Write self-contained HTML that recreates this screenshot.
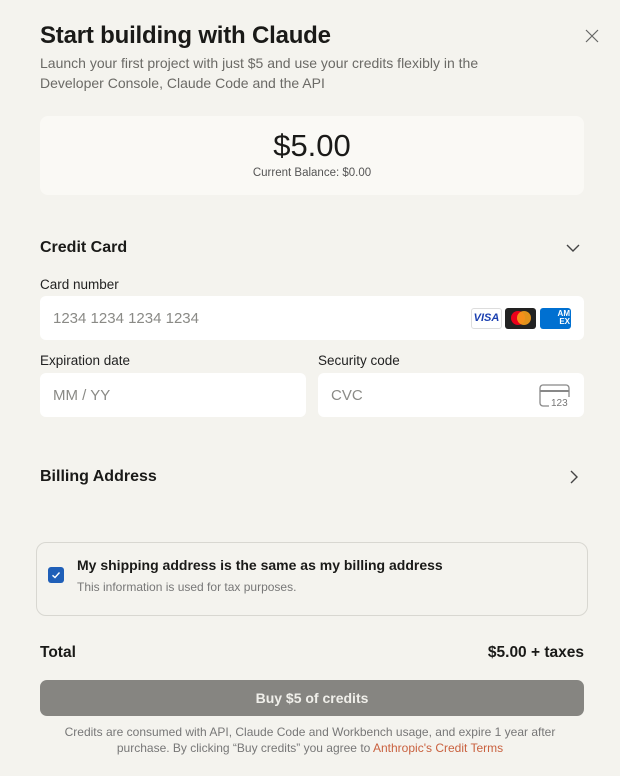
<!DOCTYPE html>
<html><head><style>
*{box-sizing:border-box;margin:0;padding:0}
body{width:620px;height:776px;background:#f4f3ee;font-family:"Liberation Sans",sans-serif;color:#1a1a18;position:relative;overflow:hidden}
.a{position:absolute}
.box{background:#fff;border-radius:6px}
.ph{color:#8a8a86;font-size:15px}
.lbl{font-size:13.5px;color:#222}
</style></head><body>
<div class="a" style="left:40px;top:22px;font-size:24px;font-weight:bold;letter-spacing:-0.2px">Start building with Claude</div>
<svg class="a" style="left:585px;top:29px" width="14" height="14" viewBox="0 0 14 14"><path d="M1 1L13 13M13 1L1 13" stroke="#666" stroke-width="1.2"/></svg>
<div class="a" style="left:40px;top:53px;font-size:14px;line-height:20px;color:#6b6a66;width:500px">Launch your first project with just $5 and use your credits flexibly in the Developer Console, Claude Code and the API</div>
<div class="a" style="left:40px;top:116px;width:544px;height:79px;background:#faf9f5;border-radius:8px;text-align:center">
<div style="font-size:31px;margin-top:12px;color:#1a1a18">$5.00</div>
<div style="font-size:11.5px;color:#555;margin-top:3px">Current Balance: $0.00</div></div>
<div class="a" style="left:40px;top:239px;font-size:16px;font-weight:bold">Credit Card</div>
<svg class="a" style="left:566px;top:243px" width="14" height="10"><path d="M1 2L7 8L13 2" stroke="#444" fill="none" stroke-width="1.4"/></svg>
<div class="a lbl" style="left:40px;top:277px">Card number</div>
<div class="a box" style="left:40px;top:296px;width:544px;height:44px"><span class="a ph" style="left:13px;top:14px">1234 1234 1234 1234</span>
<div class="a" style="left:431px;top:12px;width:31px;height:21px;border:1px solid #ddd;border-radius:3px;font-size:11px;font-weight:bold;font-style:italic;color:#1a3fb0;text-align:center;line-height:19px">VISA</div>
<div class="a" style="left:465px;top:12px;width:31px;height:21px;background:#222;border-radius:3px"><div class="a" style="left:6px;top:3px;width:14px;height:14px;border-radius:50%;background:#eb001b"></div><div class="a" style="left:12px;top:3px;width:14px;height:14px;border-radius:50%;background:#f79e1b;opacity:.9"></div></div>
<div class="a" style="left:500px;top:12px;width:31px;height:21px;background:#0070d1;border-radius:3px;color:#fff;font-size:8px;font-weight:bold;text-align:right;padding:2px 1px;line-height:8px">AM<br>EX</div></div>
<div class="a lbl" style="left:40px;top:353px">Expiration date</div>
<div class="a box" style="left:40px;top:373px;width:266px;height:44px"><span class="a ph" style="left:13px;top:14px">MM / YY</span></div>
<div class="a lbl" style="left:318px;top:353px">Security code</div>
<div class="a box" style="left:318px;top:373px;width:266px;height:44px"><span class="a ph" style="left:13px;top:14px">CVC</span>
<svg class="a" style="left:221px;top:11px" width="32" height="24"><rect x="1" y="1" width="29" height="21" rx="3" fill="none" stroke="#888" stroke-width="1.3"/><path d="M1 7H30" stroke="#888" stroke-width="2"/><rect x="10" y="13" width="22" height="11" fill="#fff"/><text x="12" y="22" font-size="10" font-family="Liberation Sans" fill="#777">123</text></svg></div>
<div class="a" style="left:40px;top:468px;font-size:16px;font-weight:bold">Billing Address</div>
<svg class="a" style="left:569px;top:470px" width="10" height="14"><path d="M2 1L8 7L2 13" stroke="#444" fill="none" stroke-width="1.4"/></svg>
<div class="a" style="left:36px;top:542px;width:552px;height:74px;border:1px solid #d8d7d1;border-radius:10px"></div>
<div class="a" style="left:48px;top:567px;width:16px;height:16px;background:#1f5fb8;border-radius:3px"><svg width="16" height="16"><path d="M4.5 8.3L7 10.5L11.5 5.5" stroke="#fff" stroke-width="1.4" fill="none"/></svg></div>
<div class="a" style="left:77px;top:557px;font-size:14px;font-weight:bold;color:#1a1a18">My shipping address is the same as my billing address</div>
<div class="a" style="left:77px;top:580px;font-size:12px;color:#777">This information is used for tax purposes.</div>
<div class="a" style="left:40px;top:644px;font-size:15.5px;font-weight:bold">Total</div>
<div class="a" style="right:36px;top:644px;font-size:15.5px;font-weight:bold">$5.00 + taxes</div>
<div class="a" style="left:40px;top:680px;width:544px;height:36px;background:#868581;border-radius:7px;color:#f0efea;font-size:14px;font-weight:bold;text-align:center;line-height:36px">Buy $5 of credits</div>
<div class="a" style="left:40px;top:724px;width:540px;text-align:center;font-size:12px;line-height:16px;color:#777">Credits are consumed with API, Claude Code and Workbench usage, and expire 1 year after purchase. By clicking “Buy credits” you agree to <span style="color:#c9613f">Anthropic's Credit Terms</span></div>
</body></html>
